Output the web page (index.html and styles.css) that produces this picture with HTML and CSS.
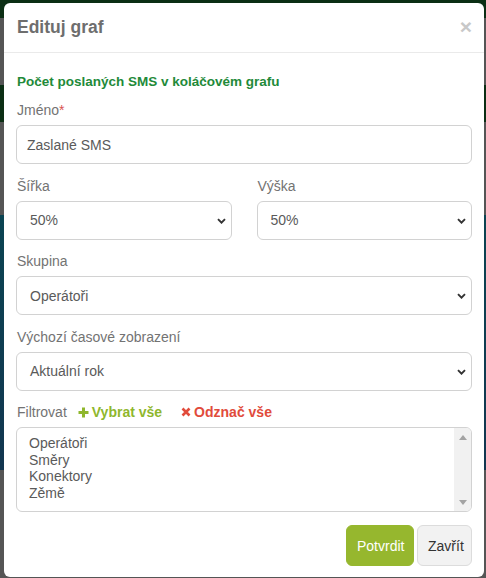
FILE: index.html
```html
<!DOCTYPE html>
<html lang="cs">
<head>
<meta charset="utf-8">
<title>Edituj graf</title>
<link rel="stylesheet" href="styles.css">
</head>
<body>
<div class="modal">
  <div class="modal-header">
    <h4 class="modal-title">Edituj graf</h4>
    <span class="close">×</span>
  </div>
  <div class="modal-body">
    <div class="subtitle">Počet poslaných SMS v koláčovém grafu</div>
    <div class="group">
      <div class="label">Jméno<span class="req">*</span></div>
      <div class="control">Zaslané SMS</div>
    </div>
    <div class="row">
      <div class="group col">
        <div class="label">Šířka</div>
        <div class="control select"><span>50%</span><svg class="chev" width="9" height="6" viewBox="0 0 9 6"><path d="M1 1.2 L4.5 4.7 L8 1.2" fill="none" stroke="#333" stroke-width="1.9"/></svg></div>
      </div>
      <div class="group col">
        <div class="label">Výška</div>
        <div class="control select"><span>50%</span><svg class="chev" width="9" height="6" viewBox="0 0 9 6"><path d="M1 1.2 L4.5 4.7 L8 1.2" fill="none" stroke="#333" stroke-width="1.9"/></svg></div>
      </div>
    </div>
    <div class="group">
      <div class="label">Skupina</div>
      <div class="control select"><span>Operátoři</span><svg class="chev" width="9" height="6" viewBox="0 0 9 6"><path d="M1 1.2 L4.5 4.7 L8 1.2" fill="none" stroke="#333" stroke-width="1.9"/></svg></div>
    </div>
    <div class="group">
      <div class="label">Výchozí časové zobrazení</div>
      <div class="control select"><span>Aktuální rok</span><svg class="chev" width="9" height="6" viewBox="0 0 9 6"><path d="M1 1.2 L4.5 4.7 L8 1.2" fill="none" stroke="#333" stroke-width="1.9"/></svg></div>
    </div>
    <div class="group last">
      <div class="label filter">Filtrovat
        <span class="act add"><svg width="11" height="11" viewBox="0 0 11 11"><path d="M5.5 0.5 V10.5 M0.5 5.5 H10.5" stroke="#8fb72d" stroke-width="3"/></svg>Vybrat vše</span>
        <span class="act del"><svg width="10" height="10" viewBox="0 0 10 10"><path d="M1.5 1.5 L8.5 8.5 M8.5 1.5 L1.5 8.5" stroke="#e14b3b" stroke-width="2.6"/></svg>Odznač vše</span>
      </div>
      <div class="listbox">
        <div class="options">
          <div>Operátoři</div>
          <div>Směry</div>
          <div>Konektory</div>
          <div>Zěmě</div>
        </div>
        <div class="scrollbar">
          <svg width="8" height="5" viewBox="0 0 8 5"><path d="M0 5 L4 0 L8 5 Z" fill="#a3a3a3"/></svg>
          <svg width="8" height="5" viewBox="0 0 8 5"><path d="M0 0 L4 5 L8 0 Z" fill="#a3a3a3"/></svg>
        </div>
      </div>
    </div>
    <div class="footer">
      <button class="btn primary">Potvrdit</button>
      <button class="btn secondary">Zavřít</button>
    </div>
  </div>
</div>
</body>
</html>
```
FILE: styles.css
```css
html, body {
  margin: 0;
  padding: 0;
  height: 578px;
  overflow: hidden;
}
body {
  font-family: "Liberation Sans", Arial, sans-serif;
  font-size: 14px;
  background: linear-gradient(to bottom,
    #0b2e14 0, #0b2e14 18px,
    #555555 18px, #555555 85px,
    #0b2e14 85px, #0b2e14 122px,
    #555555 122px, #555555 215px,
    #0b4452 215px, #123650 470px,
    #555555 470px);
  padding-top: 3px;
  padding-left: 4px;
  box-sizing: border-box;
}
.modal {
  width: 480px;
  background: #fff;
  border-radius: 6px;
}
.modal-header {
  height: 49px;
  border-bottom: 1px solid #eaeaea;
  display: flex;
  align-items: center;
  justify-content: space-between;
  padding: 0 13px 0 13px;
}
.modal-title {
  margin: 0;
  font-size: 17.5px;
  font-weight: bold;
  color: #6e6e6e;
}
.close {
  font-size: 21px;
  font-weight: bold;
  color: #c8c8c8;
  line-height: 1;
  margin-top: -2px;
  margin-right: -1px;
}
.modal-body {
  padding: 21px 12px 11px 12px;
}
.subtitle {
  color: #228a39;
  font-weight: bold;
  font-size: 13.5px;
  line-height: 16px;
  padding-left: 1px;
  margin-bottom: 10px;
}
.group {
  margin-bottom: 11.5px;
}
.label {
  color: #737373;
  line-height: 20px;
  margin-bottom: 5px;
  padding-left: 1px;
}
.req {
  color: #d9534f;
}
.control {
  box-sizing: border-box;
  height: 39px;
  border: 1px solid #d2d2d2;
  border-radius: 6px;
  display: flex;
  align-items: center;
  padding: 0 10px;
  color: #5a5a5a;
}
.select {
  justify-content: space-between;
  padding: 0 5px 0 13px;
}
.chev {
  display: block;
  margin-top: 1px;
}
.row {
  display: flex;
  gap: 25px;
}
.col {
  flex: 1;
}
.filter {
  display: flex;
  align-items: center;
}
.act {
  font-weight: bold;
  display: inline-flex;
  align-items: center;
  gap: 3px;
}
.add {
  color: #8fb72d;
  margin-left: 11px;
}
.del {
  color: #e14b3b;
  margin-left: 19px;
}
.listbox {
  box-sizing: border-box;
  height: 85px;
  border: 1px solid #d2d2d2;
  border-radius: 6px;
  display: flex;
  overflow: hidden;
}
.options {
  flex: 1;
  padding: 7px 12px 6px;
  color: #5a5a5a;
  line-height: 16.5px;
}
.scrollbar {
  width: 17px;
  background: #f1f1f1;
  display: flex;
  flex-direction: column;
  justify-content: space-between;
  align-items: center;
  padding: 7px 0 6px;
  box-sizing: border-box;
}
.scrollbar svg {
  display: block;
}
.footer {
  margin-top: 13px;
  display: flex;
  justify-content: flex-end;
  gap: 3px;
}
.btn {
  font-family: "Liberation Sans", Arial, sans-serif;
  font-size: 14px;
  height: 41px;
  border-radius: 6px;
  padding: 0 10px;
}
.primary {
  background: #96b72e;
  border: 1px solid #96b72e;
  color: #fff;
  width: 68px;
}
.secondary {
  background: #f2f2f2;
  border: 1px solid #dcdcdc;
  color: #333;
  width: 55px;
}
```
